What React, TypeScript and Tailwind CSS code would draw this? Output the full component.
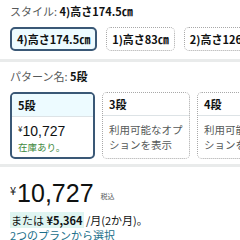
const font = { fontFamily: '"Noto Sans CJK JP", "Liberation Sans", sans-serif' };

function StyleButton({ label, selected }: { label: string; selected?: boolean }) {
  return (
    <div
      className={`shrink-0 h-[24px] px-[5px] flex items-center rounded-[5px] text-[11px] font-bold text-[#0f1111] whitespace-nowrap ${
        selected ? 'border-2 border-[#3a5876] bg-[#edfbff]' : 'border border-dotted border-[#a8a8a8]'
      }`}
    >
      {label}
    </div>
  );
}

function PatternCard({ title, selected, children, w }: { title: string; selected?: boolean; children: React.ReactNode; w: string }) {
  return (
    <div
      className={`shrink-0 ${w} h-[67px] rounded-[5px] overflow-hidden flex flex-col ${
        selected ? 'border-2 border-[#3a5876]' : 'border border-dotted border-[#a8a8a8]'
      }`}
    >
      <div
        className={`h-[23px] shrink-0 flex items-center px-[6px] text-[11px] font-bold text-[#0f1111] border-b border-[#dde3e6] ${
          selected ? 'bg-[#edfbff]' : ''
        }`}
      >
        {title}
      </div>
      <div className="px-[6px] pt-[6px] flex-1">{children}</div>
    </div>
  );
}

export default function App() {
  return (
    <div className="w-[240px] h-[240px] overflow-hidden bg-white" style={font}>
      <div className="px-[10px] pt-[3px] h-[59px]">
        <div className="text-[11px] leading-[16px] whitespace-nowrap">
          <span className="text-[#565959]">スタイル: </span>
          <span className="font-bold text-[#0f1111]">4)高さ174.5㎝</span>
        </div>
        <div className="flex gap-[9px] mt-[8px]">
          <StyleButton label="4)高さ174.5㎝" selected />
          <StyleButton label="1)高さ83㎝" />
          <StyleButton label="2)高さ126㎝" />
        </div>
      </div>
      <div className="h-[3px] bg-[#e9ebeb]" />

      <div className="px-[10px] pt-[6px] h-[102px]">
        <div className="text-[11px] leading-[16px] whitespace-nowrap">
          <span className="text-[#565959]">パターン名: </span>
          <span className="font-bold text-[#0f1111]">5段</span>
        </div>
        <div className="flex gap-[7px] mt-[8px]">
          <PatternCard title="5段" selected w="w-[85px]">
            <div className="flex items-start text-[#0f1111] leading-none mt-[1px]">
              <span className="text-[8px] mt-[1px]">¥</span>
              <span className="text-[14px] leading-[14px]" style={{ fontFamily: '"Liberation Sans", sans-serif' }}>10,727</span>
            </div>
            <div className="text-[9.5px] text-[#3f8a3f] mt-[3px] leading-[12px]">在庫あり。</div>
          </PatternCard>
          <PatternCard title="3段" w="w-[88px]">
            <div className="text-[10.5px] leading-[15px] text-[#565959]">
              利用可能なオプ
              <br />
              ションを表示
            </div>
          </PatternCard>
          <PatternCard title="4段" w="w-[88px]">
            <div className="text-[10.5px] leading-[15px] text-[#565959] whitespace-nowrap">
              利用可能なオプ
              <br />
              ションを表示
            </div>
          </PatternCard>
        </div>
      </div>
      <div className="h-[3px] bg-[#e9ebeb]" />

      <div className="px-[10px] pt-[12px]">
        <div className="flex items-start text-[#0f1111]">
          <span className="text-[11px] leading-[12px] mt-[5px] mr-[1px]">¥</span>
          <span className="text-[25px] leading-[28px]" style={{ fontFamily: '"Liberation Sans", sans-serif' }}>
            10,727
          </span>
          <span className="text-[7px] text-[#565959] ml-[7px] mt-[12px]">税込</span>
        </div>
        <div className="mt-[6px] text-[11px] leading-[14px] whitespace-nowrap">
          <span className="bg-[#dff5f1] px-[1px] text-[#0f1111]">
            または <span className="font-bold">¥5,364</span>
          </span>
          <span className="text-[#0f1111]"> /月(2か月)。</span>
        </div>
        <div className="text-[11px] leading-[14px] text-[#1a6f8a] mt-[1px]">2つのプランから選択</div>
      </div>
    </div>
  );
}
